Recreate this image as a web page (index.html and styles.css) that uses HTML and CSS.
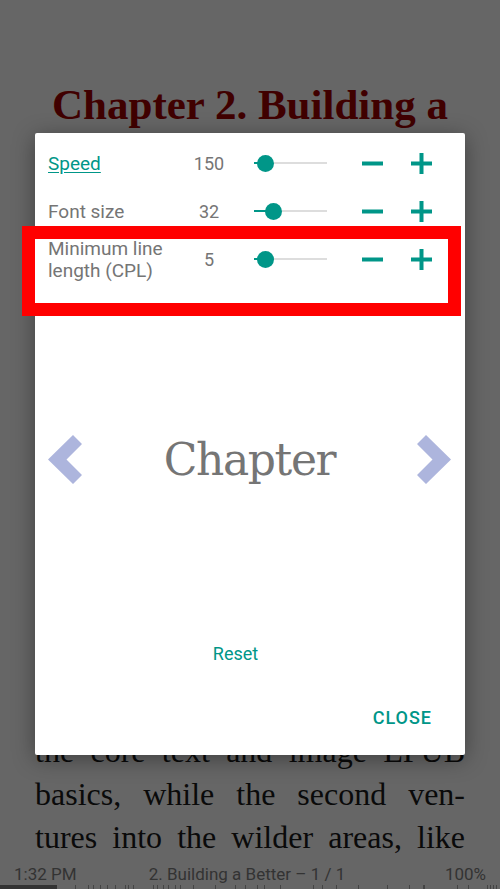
FILE: index.html
```html
<!DOCTYPE html>
<html>
<head>
<meta charset="utf-8">
<link rel="stylesheet" href="styles.css">
</head>
<body>
<div class="page">
  <h1 class="page-title">Chapter 2. Building a</h1>
  <div class="page-body">
    <div class="line">the core text and image EPUB</div>
    <div class="line">basics, while the second ven-</div>
    <div class="line">tures into the wilder areas, like</div>
  </div>
  <div class="status">
    <div class="status-row">
      <span class="status-time">1:32 PM</span>
      <span class="status-chapter">2. Building a Better – 1 / 1</span>
      <span class="status-pct">100%</span>
    </div>
    <div class="progress">
      <div class="progress-fill"></div>
      <i class="tick" style="left:75px"></i><i class="tick" style="left:88px"></i><i class="tick" style="left:93px"></i><i class="tick" style="left:100px"></i><i class="tick" style="left:107px"></i><i class="tick" style="left:115px"></i><i class="tick" style="left:125px"></i><i class="tick" style="left:128px"></i><i class="tick" style="left:133px"></i><i class="tick" style="left:153px"></i><i class="tick" style="left:157px"></i><i class="tick" style="left:163px"></i><i class="tick" style="left:168px"></i><i class="tick" style="left:175px"></i><i class="tick" style="left:180px"></i><i class="tick" style="left:193px"></i><i class="tick" style="left:215px"></i><i class="tick" style="left:235px"></i><i class="tick" style="left:245px"></i><i class="tick" style="left:257px"></i><i class="tick" style="left:264px"></i><i class="tick" style="left:280px"></i><i class="tick" style="left:313px"></i><i class="tick" style="left:322px"></i><i class="tick" style="left:336px"></i><i class="tick" style="left:358px"></i><i class="tick" style="left:387px"></i><i class="tick" style="left:409px"></i><i class="tick thick" style="left:423px"></i><i class="tick" style="left:457px"></i><i class="tick" style="left:468px"></i><i class="tick" style="left:487px"></i><i class="tick" style="left:490px"></i><i class="tick" style="left:493px"></i><i class="tick" style="left:496px"></i>
    </div>
  </div>
</div>

<div class="dialog">
  <div class="rows">
    <div class="row">
      <div class="label link">Speed</div>
      <div class="value">150</div>
      <div class="slider"><div class="track-on" style="width:11px"></div><div class="thumb" style="left:11px"></div></div>
      <svg class="btn minus" viewBox="0 0 21 21"><rect x="0" y="8.5" width="21" height="4" fill="#009688"/></svg>
      <svg class="btn plus" viewBox="0 0 21 21"><rect x="0" y="8.5" width="21" height="4" fill="#009688"/><rect x="8.5" y="0" width="4" height="21" fill="#009688"/></svg>
    </div>
    <div class="row">
      <div class="label">Font size</div>
      <div class="value">32</div>
      <div class="slider"><div class="track-on" style="width:19px"></div><div class="thumb" style="left:19px"></div></div>
      <svg class="btn minus" viewBox="0 0 21 21"><rect x="0" y="8.5" width="21" height="4" fill="#009688"/></svg>
      <svg class="btn plus" viewBox="0 0 21 21"><rect x="0" y="8.5" width="21" height="4" fill="#009688"/><rect x="8.5" y="0" width="4" height="21" fill="#009688"/></svg>
    </div>
    <div class="row">
      <div class="label">Minimum line<br>length (CPL)</div>
      <div class="value">5</div>
      <div class="slider"><div class="track-on" style="width:11px"></div><div class="thumb" style="left:11px"></div></div>
      <svg class="btn minus" viewBox="0 0 21 21"><rect x="0" y="8.5" width="21" height="4" fill="#009688"/></svg>
      <svg class="btn plus" viewBox="0 0 21 21"><rect x="0" y="8.5" width="21" height="4" fill="#009688"/><rect x="8.5" y="0" width="4" height="21" fill="#009688"/></svg>
    </div>
  </div>

  <div class="preview">
    <svg class="chev" viewBox="0 0 34 49"><polygon points="0,24.5 25,0 34,9 18.5,24.5 34,40 25,49" fill="#adb5dd"/></svg>
    <div class="preview-word">Chapter</div>
    <svg class="chev" viewBox="0 0 34 49"><polygon points="34,24.5 9,0 0,9 15.5,24.5 0,40 9,49" fill="#adb5dd"/></svg>
  </div>

  <div class="reset-row"><span class="reset">Reset</span></div>
  <div class="actions"><span class="close">CLOSE</span></div>
</div>

<div class="highlight"></div>
</body>
</html>
```

FILE: styles.css
```css
html, body {
  margin: 0;
  padding: 0;
}
body {
  width: 500px;
  height: 889px;
  overflow: hidden;
  background: #666666;
  position: relative;
  font-family: Roboto, "Noto Sans", sans-serif;
}
.page {
  height: 889px;
  display: flex;
  flex-direction: column;
}
.page-title {
  margin: 80px 0 0 0;
  font-family: "Liberation Serif", serif;
  font-weight: bold;
  font-size: 43px;
  line-height: 50px;
  color: #400000;
  text-align: center;
}
.page-body {
  margin-top: auto;
  padding: 0 35px;
  font-family: "Liberation Serif", serif;
  font-size: 32px;
  line-height: 43px;
  color: #0a0a0a;
}
.line {
  text-align: justify;
  text-align-last: justify;
}
.status {
  height: 30px;
  display: flex;
  flex-direction: column;
}
.status-row {
  height: 26px;
  box-sizing: border-box;
  padding: 5px 14px 0 14px;
  display: grid;
  grid-template-columns: 1fr auto 1fr;
  font-size: 17px;
  line-height: 20px;
  color: #333333;
}
.status-chapter {
  position: relative;
  left: -3px;
}
.status-pct {
  text-align: right;
}
.progress {
  height: 4px;
  position: relative;
}
.progress-fill {
  width: 57px;
  height: 4px;
  background: #333333;
}
.tick {
  position: absolute;
  bottom: 0;
  width: 1px;
  height: 4px;
  background: #444444;
}
.tick.thick {
  width: 2px;
}

.dialog {
  position: absolute;
  left: 35px;
  top: 133px;
  width: 430px;
  height: 622px;
  background: #ffffff;
  border-radius: 2px;
  box-shadow: 0 4px 22px rgba(0, 0, 0, 0.38);
  display: flex;
  flex-direction: column;
}
.rows {
  padding-top: 6px;
}
.row {
  height: 48px;
  display: flex;
  align-items: center;
  padding-left: 13px;
}
.label {
  width: 136px;
  font-size: 19px;
  line-height: 22px;
  color: #757575;
  padding-top: 2px;
}
.label.link {
  color: #009688;
  text-decoration: underline;
  text-underline-offset: 2px;
}
.value {
  width: 50px;
  text-align: center;
  font-size: 18px;
  line-height: 22px;
  color: #757575;
  padding-top: 2px;
}
.slider {
  position: relative;
  width: 73px;
  height: 2px;
  margin-left: 20px;
  background: #dddddd;
}
.track-on {
  position: absolute;
  left: 0;
  top: 0;
  height: 2px;
  background: #009688;
}
.thumb {
  position: absolute;
  top: 1px;
  width: 17px;
  height: 17px;
  margin: -8.5px 0 0 -8.5px;
  border-radius: 50%;
  background: #009688;
}
.btn {
  width: 21px;
  height: 21px;
  display: block;
}
.minus {
  margin-left: 35px;
}
.plus {
  margin-left: 28px;
}

.preview {
  margin-top: 116px;
  height: 120px;
  display: flex;
  align-items: center;
  justify-content: space-between;
  padding: 0 14px 0 13px;
}
.chev {
  width: 34px;
  height: 49px;
  display: block;
}
.preview-word {
  font-family: "DejaVu Serif", serif;
  font-size: 44px;
  letter-spacing: -1.4px;
  color: #757575;
  line-height: 60px;
  padding-top: 2px;
}
.reset-row {
  margin-top: 124px;
  text-align: center;
  padding-right: 29px;
  font-size: 18px;
  line-height: 22px;
}
.reset {
  color: #009688;
}
.actions {
  margin-top: 42px;
  text-align: right;
  padding-right: 33px;
  font-size: 18px;
  line-height: 22px;
}
.close {
  color: #009688;
  font-weight: 500;
  letter-spacing: 1px;
}

.highlight {
  position: absolute;
  left: 22px;
  top: 226px;
  width: 439px;
  height: 90px;
  box-sizing: border-box;
  border: 13px solid #ff0000;
}
```
